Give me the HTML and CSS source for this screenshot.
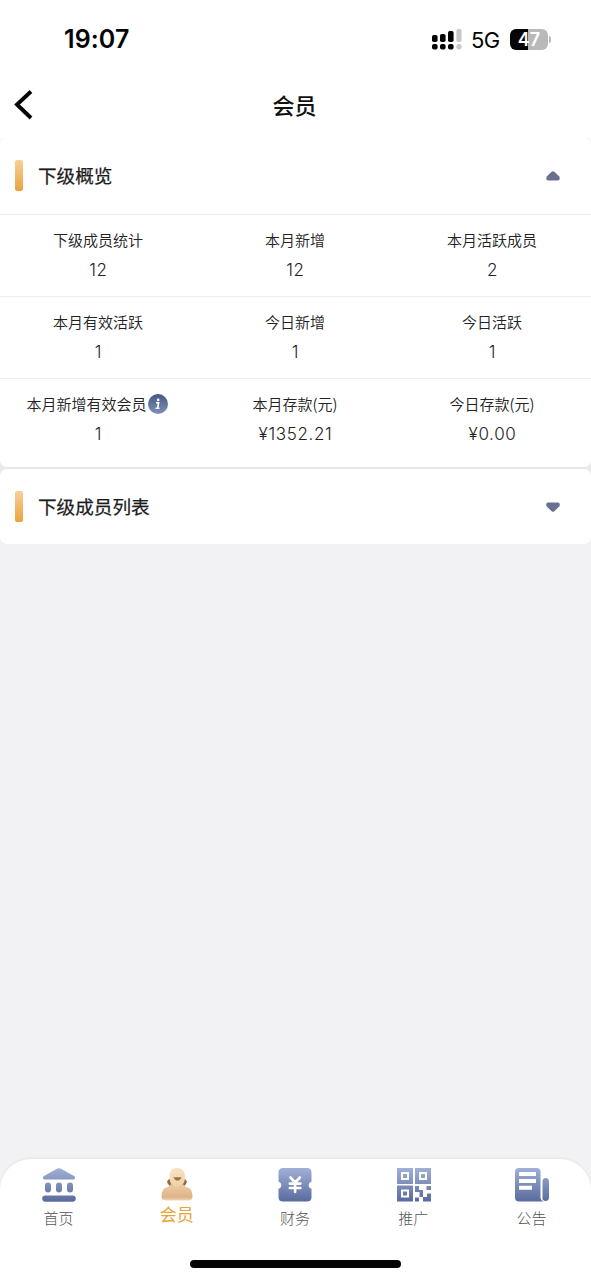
FILE: index.html
```html
<!DOCTYPE html>
<html lang="zh-CN">
<head>
<meta charset="utf-8">
<title>会员</title>
<link rel="stylesheet" href="styles.css">
</head>
<body>
<div class="app">
  <header class="status">
    <span class="clock">19:07</span>
    <div class="status-right">
      <svg class="signal" width="30" height="20" viewBox="0 0 30 20">
        <g fill="#050505"><rect y="5" width="5.6" height="7" rx="1.8"/><rect x="8" y="4" width="5.6" height="8" rx="1.8"/><rect x="16" y="1" width="5.6" height="11" rx="1.8"/><rect y="14" width="5.6" height="5.4" rx="2"/><rect x="8" y="14" width="5.6" height="5.4" rx="2"/><rect x="16" y="14" width="5.6" height="5.4" rx="2"/></g>
        <g fill="#c9c9cb"><rect x="24.4" y="-1" width="5.2" height="13" rx="1.8"/><rect x="24.4" y="14" width="5.2" height="5.4" rx="2.2"/></g>
      </svg>
      <span class="network">5G</span>
      <span class="battery">47</span>
    </div>
  </header>
  <nav class="navbar">
    <svg class="back" width="20" height="30" viewBox="0 0 20 30"><path d="M17 1.500 3 14.500l14 13.500" fill="none" stroke="#050505" stroke-width="3.900"/></svg>
    <h1 class="title">会员</h1>
  </nav>
  <main class="content">
    <section class="card">
      <div class="card-head">
        <i class="bar"></i><h2 class="heading">下级概览</h2>
        <svg width="14" height="10" viewBox="0 0 14 10"><path d="M5.600.8Q7-.3 8.400.8l4.900 4.800Q14.600 9.400 12 9.400H2Q-.6 9.400.7 5.600Z" fill="#6b6f92"/></svg>
      </div>
      <div class="grid">
        <div class="cell"><span class="label">下级成员统计</span><span class="value">12</span></div>
        <div class="cell"><span class="label">本月新增</span><span class="value">12</span></div>
        <div class="cell"><span class="label">本月活跃成员</span><span class="value">2</span></div>
        <div class="cell"><span class="label">本月有效活跃</span><span class="value">1</span></div>
        <div class="cell"><span class="label">今日新增</span><span class="value">1</span></div>
        <div class="cell"><span class="label">今日活跃</span><span class="value">1</span></div>
        <div class="cell last"><span class="label with-info">本月新增有效会员<svg width="20" height="20" viewBox="0 0 20 20"><defs><linearGradient id="info" x2="0" y2="1"><stop stop-color="#465785"/><stop offset="1" stop-color="#8090b8"/></linearGradient></defs><circle cx="10" cy="10" r="10" fill="url(#info)"/><circle cx="10.200" cy="5.900" r="1.300" fill="#fff"/><path d="M8 8.700h2.600l-1 5.500M7.500 14.200H11.500" fill="none" stroke="#fff" stroke-width="1.600"/></svg></span><span class="value">1</span></div>
        <div class="cell last"><span class="label">本月存款(元)</span><span class="value">¥1352.21</span></div>
        <div class="cell last"><span class="label">今日存款(元)</span><span class="value">¥0.00</span></div>
      </div>
    </section>
    <section class="card">
      <div class="card-head">
        <i class="bar"></i><h2 class="heading">下级成员列表</h2>
        <svg width="14" height="10" viewBox="0 0 14 10"><path d="M5.600 9.200Q7 10.300 8.400 9.200l4.900-4.800Q14.600.6 12 .6H2Q-.6.6.7 4.400Z" fill="#6b6f92"/></svg>
      </div>
    </section>
  </main>
  <footer class="tabbar">
    <a class="tab">
      <svg width="34" height="34" viewBox="0 0 34 34"><defs><linearGradient id="blue" gradientUnits="userSpaceOnUse" x1="0" y1="0" x2="0" y2="34"><stop stop-color="#a0b0d7"/><stop offset="1" stop-color="#586a9d"/></linearGradient></defs><g fill="url(#blue)"><path d="M14.500 1Q17-.6 19.500 1L32.500 8.300Q34 10.800 31.500 11.400H2.500Q0 10.800 1.500 8.300Z"/><rect x="3" y="14.500" width="6" height="10" rx="3"/><rect x="14" y="14.500" width="6" height="10" rx="3"/><rect x="25" y="14.500" width="6" height="10" rx="3"/><rect x=".2" y="27.500" width="33.600" height="6.200" rx="3.100"/></g></svg>
      <span class="tab-text">首页</span>
    </a>
    <a class="tab active">
      <svg width="34" height="34" viewBox="0 0 34 34"><defs><linearGradient id="gold" x2="0" y2="1"><stop stop-color="#efcda5"/><stop offset=".8" stop-color="#dcb48a"/><stop offset="1" stop-color="#f4d5af"/></linearGradient><linearGradient id="goldLight" x2="0" y2="1"><stop stop-color="#f9e2c3"/><stop offset="1" stop-color="#efd0a5"/></linearGradient></defs><path d="M9 11 7 13.500q1 6 10 7 9-1 10-7L25 11Z" fill="#946b43"/><path d="M17 0C11 0 9.500 4 9.500 9c0 6 3 10.500 7.500 10.500S25 15 25 9C25 4 23 0 17 0Z" fill="url(#goldLight)"/><path d="M11 16c-.5 2-3 3-5.500 3.800C2.500 21 1.500 25.500 1.500 29q0 3.500 5 3.500h21q5 0 5-3.500c0-4-1-8-4-9.200-2.500-.8-5-1.800-5.500-3.800-2 4-10 4-12 0Z" fill="url(#gold)"/><path d="M13.500 9.200h8q-1.500 3.400-4 3.400t-4-3.400Z" fill="#987346"/></svg>
      <span class="tab-text">会员</span>
    </a>
    <a class="tab">
      <svg width="34" height="34" viewBox="0 0 34 34"><path d="M5 0h24q4.500 0 4.500 4.500v9.200a3.600 3.600 0 0 0 0 7V29q0 4.500-4.500 4.500H5Q.5 33.500.5 29v-8.300a3.600 3.600 0 0 0 0-7V4.500Q.5 0 5 0Z" fill="url(#blue)"/><path d="m12.500 9.500 4.600 5 4.800-5M11.800 15.600h10.600M11.800 20h10.600M17.100 15v9" fill="none" stroke="#fff" stroke-width="2.600" stroke-linecap="round"/></svg>
      <span class="tab-text">财务</span>
    </a>
    <a class="tab">
      <svg width="34" height="34" viewBox="0 0 34 34"><g fill="url(#blue)"><path fill-rule="evenodd" d="M0 0h16v16H0ZM4 4v8h8V4ZM6 6h4v4H6ZM18 0h16v16H18ZM22 4v8h8V4ZM24 6h4v4h-4ZM0 17.600h16v16H0ZM4 21.600v8h8v-8ZM6 23.600h4v4H6Z"/><path d="M18 18h4v4h4v7h-3.500v-5H18ZM29.500 18H34v4h-4.500ZM18 29.500h4v4h-4ZM30 25.500h4v8h-8V29h4Z"/></g></svg>
      <span class="tab-text">推广</span>
    </a>
    <a class="tab">
      <svg width="34" height="34" viewBox="0 0 34 34"><path d="M4 0h17.500q4 0 4 4v25q0 3 3 4.500H4q-4 0-4-4V4q0-4 4-4Zm23.500 14q0-4 3.200-4t3.300 4v15q0 4-3.500 4t-3-4Z" fill="url(#blue)"/><path d="M4 4h17v4H4ZM4 11h17v4H4ZM4 17.800h13v4H4Z" fill="#fff"/></svg>
      <span class="tab-text">公告</span>
    </a>
    <i class="home"></i>
  </footer>
</div>
</body>
</html>
```
FILE: styles.css
```css
* { box-sizing: border-box; }
body { margin: 0; font-family: "Noto Sans", "Noto Sans CJK SC", sans-serif; color: #222; }
svg { display: block; flex: none; overflow: visible; }
.app { width: 591px; height: 1280px; display: flex; flex-direction: column; background: #f2f2f5; overflow: hidden; }
.status { height: 80px; flex: none; background: #fff; display: flex; justify-content: space-between; padding: 0 43px 0 64px; font-family: Inter, sans-serif; color: #050505; }
.clock { font-size: 25px; line-height: 79px; font-weight: 600; letter-spacing: .1px; }
.status-right { height: 79px; display: flex; align-items: center; }
.network { font-size: 22px; margin-left: 9px; letter-spacing: -.5px; width: 39px; }
.battery { width: 38px; height: 21px; border-radius: 6px; background: linear-gradient(90deg, #050505 47%, #b9b9bb 47%); color: #fff; font-size: 18px; font-weight: 600; line-height: 21px; text-align: center; position: relative; }
.battery::after { content: ""; position: absolute; right: -3px; top: 7px; width: 2px; height: 7px; border-radius: 0 2px 2px 0; background: #bbb; }
.navbar { height: 58px; flex: none; background: #fff; display: grid; grid-template-columns: 60px 1fr 62px; align-items: center; padding-bottom: 9px; }
.back { margin-left: 14px; }
.title { margin: 0; text-align: center; font: 500 22px/30px "Noto Sans CJK SC", sans-serif; color: #111; padding-bottom: 2px; }
.content { flex: 1; display: flex; flex-direction: column; gap: 2px; background: linear-gradient(#f7f7f8 8px, #e9e9eb 8px, #e9e9eb 345px, #f2f2f5 345px); }
.card { background: #fff; border-radius: 7px; }
.card + .card { height: 75px; }
.card-head { height: 75px; display: flex; align-items: center; padding: 0 31px 0 15px; }
.bar { width: 8px; height: 31px; border-radius: 2px; background: linear-gradient(#f7d09b, #eca23c); margin-right: 15px; }
.heading { flex: 1; margin: 0; font: 400 18.6px/28px "Noto Sans CJK SC", sans-serif; color: #1c1c1c; -webkit-text-stroke: .25px #1c1c1c; padding-bottom: 1px; }
.grid { display: grid; grid-template-columns: repeat(3, 1fr); padding-top: 1px; }
.cell { height: 82px; border-top: 1px solid #ececee; display: flex; flex-direction: column; align-items: center; padding-top: 13px; }
.last { height: 89px; }
.label { font: 350 15px/24px "Noto Sans CJK SC", sans-serif; color: #222; margin-right: 1px; }
.with-info { display: flex; align-items: center; gap: 1px; margin-right: 3px; }
.value { font: 350 17px/24px Inter, sans-serif; letter-spacing: .65px; margin-top: 6px; color: #222; }
.tabbar { height: 121px; flex: none; position: relative; background: #fff; border-radius: 31px 31px 0 0; box-shadow: 0 -1px 2px #e4e4e6; display: grid; grid-template-columns: repeat(5, 1fr); padding-top: 9px; }
.tab { display: flex; flex-direction: column; align-items: center; }
.tab-text { font: 300 15px/24px "Noto Sans CJK SC", sans-serif; color: #555; margin: 4px 1px 0 0; }
.active .tab-text { font-size: 17px; font-weight: 400; color: #e7a43a; margin-top: 0; }
.home { position: absolute; left: 190px; bottom: 12px; width: 211px; height: 8px; border-radius: 4px; background: #050505; }
```
